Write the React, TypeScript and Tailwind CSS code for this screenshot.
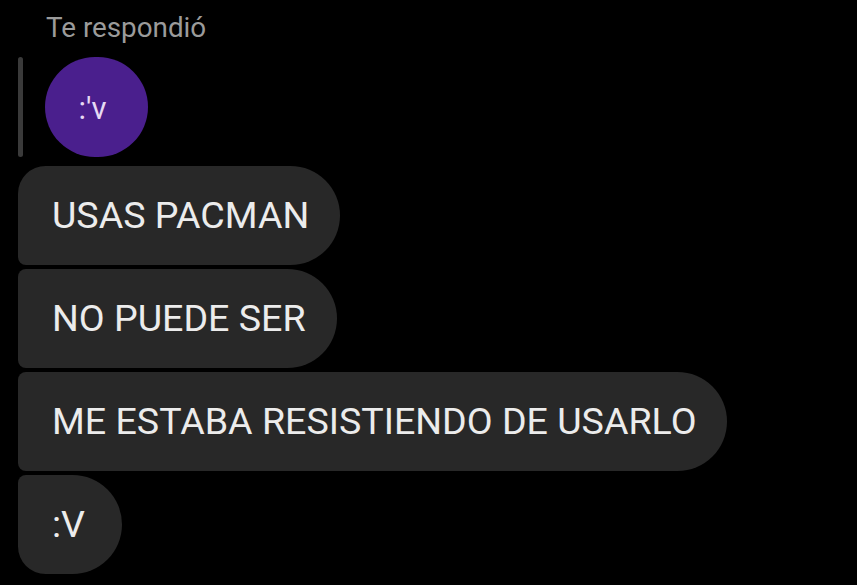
const font = { fontFamily: 'Roboto, "Liberation Sans", sans-serif' }

interface BubbleProps {
  text: string
  corners: string
}

function Bubble({ text, corners }: BubbleProps) {
  return (
    <div
      className={`flex h-[99px] min-w-[104px] items-center self-start bg-[#282828] pl-[34px] pr-[31px] text-[37.6px] text-[#ececec] ${corners}`}
    >
      <span className="whitespace-nowrap">{text}</span>
    </div>
  )
}

export default function App() {
  return (
    <div className="flex h-[585px] w-[857px] flex-col overflow-hidden bg-black pl-[18px]" style={font}>
      <div className="h-[57px] pl-[28px] pt-[12px] text-[27.8px] leading-[32px] text-[#9b9b9b]">Te respondió</div>

      <div className="flex h-[100px] items-stretch gap-[22px]">
        <div className="w-[5px] rounded-full bg-[#3a3a3a]" />
        <div className="flex h-[100px] w-[103px] items-center justify-center rounded-full bg-[#4a1f8d]">
          <span className="pr-[8px] pt-[2px] text-[31px] leading-none text-[#e6daf3]">:'v</span>
        </div>
      </div>

      <div className="mt-[9px] flex flex-col gap-[4px]">
        <Bubble text="USAS PACMAN" corners="rounded-tl-[28px] rounded-bl-[8px] rounded-r-[50px]" />
        <Bubble text="NO PUEDE SER" corners="rounded-l-[8px] rounded-r-[50px]" />
        <Bubble text="ME ESTABA RESISTIENDO DE USARLO" corners="rounded-l-[8px] rounded-r-[50px]" />
        <Bubble text=":V" corners="rounded-tl-[8px] rounded-bl-[28px] rounded-r-[50px]" />
      </div>
    </div>
  )
}
